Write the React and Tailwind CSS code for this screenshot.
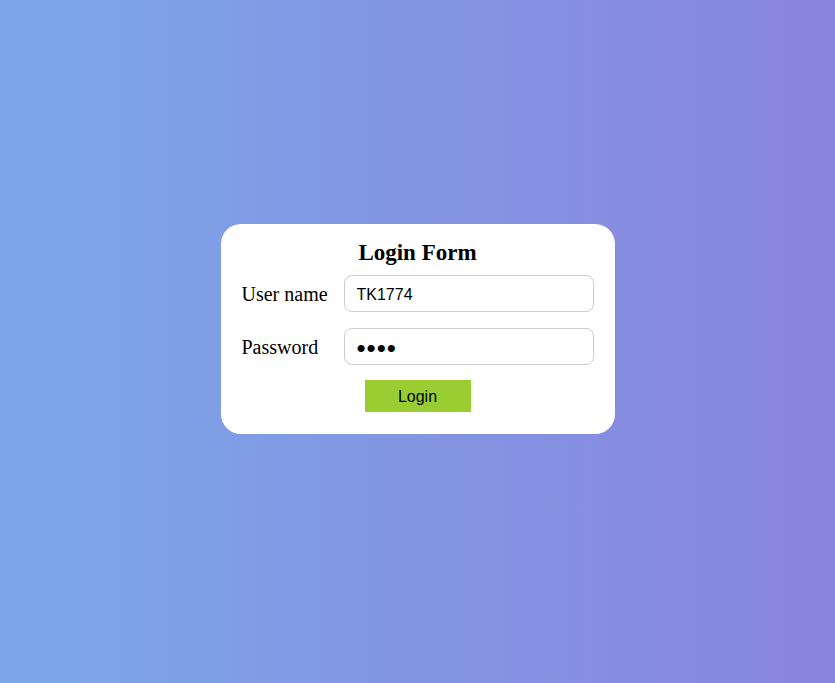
import React from 'react';

const LoginForm = () => {
  const handleSubmit = (e) => {
    e.preventDefault();
  };

  return (
    <form
      className="w-[394px] bg-white rounded-[20px] px-[21px] pt-[16px] pb-[22px] flex flex-col"
      onSubmit={handleSubmit}
    >
      <h2 className="font-['Liberation_Serif','Times_New_Roman',serif] text-[23px] leading-[26px] font-bold text-center text-black mb-[9px]">
        Login Form
      </h2>

      <div className="flex items-center mb-[16px]">
        <label className="w-[102px] font-['Liberation_Serif','Times_New_Roman',serif] text-[20px] text-black">
          User name
        </label>
        <input
          type="text"
          defaultValue="TK1774"
          className="w-[250px] h-[37px] border border-[#cccccc] rounded-[8px] px-[12px] pt-[3px] font-['Liberation_Sans',Arial,sans-serif] text-[16px] text-black outline-none"
        />
      </div>

      <div className="flex items-center mb-[15px]">
        <label className="w-[102px] font-['Liberation_Serif','Times_New_Roman',serif] text-[20px] text-black">
          Password
        </label>
        {/* bigger font so the mask dots match the reference size */}
        <input
          type="password"
          defaultValue="1774"
          className="w-[250px] h-[37px] border border-[#cccccc] rounded-[8px] px-[12px] pt-[3px] font-['Liberation_Sans',Arial,sans-serif] text-[26px] tracking-[1px] text-black outline-none"
        />
      </div>

      <div className="flex justify-center">
        <button
          type="submit"
          className="w-[106px] h-[32px] pt-[2px] bg-[#9acd32] font-['Liberation_Sans',Arial,sans-serif] text-[16px] text-black"
        >
          Login
        </button>
      </div>
    </form>
  );
};

export default function App() {
  return (
    <div className="min-h-screen w-full flex items-center justify-center bg-gradient-to-r from-[#7aa7e9] to-[#8984de] pb-[25px]">
      <LoginForm />
    </div>
  );
}
